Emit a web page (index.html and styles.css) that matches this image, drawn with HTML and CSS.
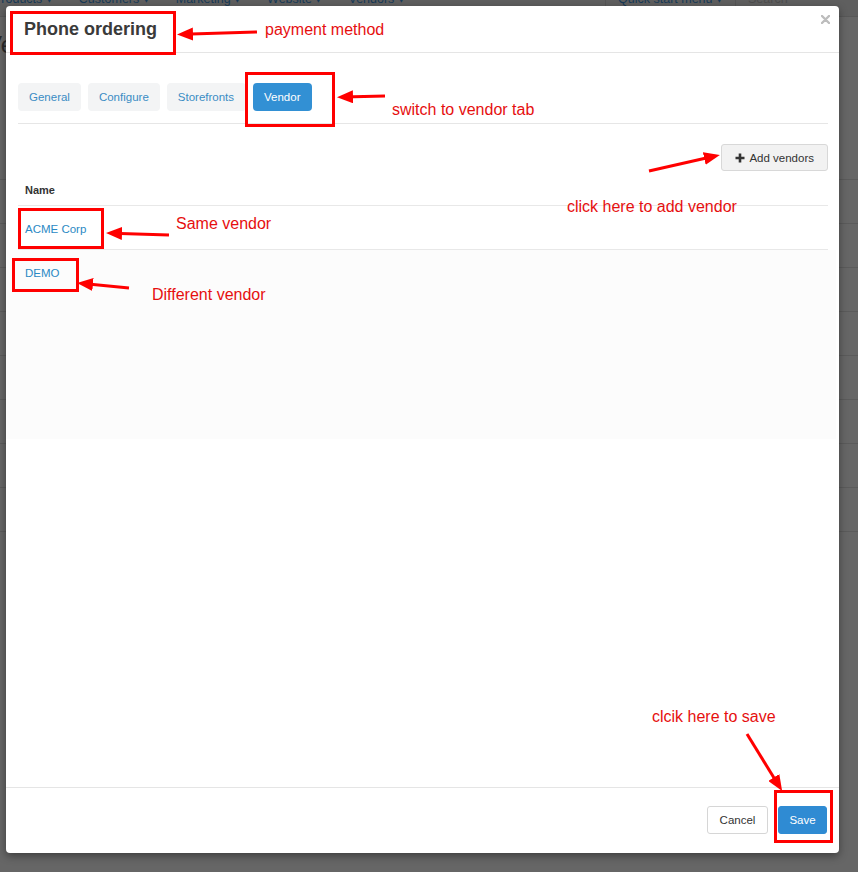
FILE: index.html
```html
<!DOCTYPE html>
<html lang="en">
<head>
  <meta charset="UTF-8" />
  <title>Phone ordering</title>
  <link rel="stylesheet" href="styles.css">
</head>
<body>

  <!-- page under the dialog, already dimmed -->
  <div class="page">
    <nav class="navbar">
      <a class="first">Products ▾</a>
      <a>Customers ▾</a>
      <a>Marketing ▾</a>
      <a>Website ▾</a>
      <a>Vendors ▾</a>
      <span class="nav-right">
        <a class="quick">Quick start menu ▾</a>
        <span class="search">Search</span>
      </span>
    </nav>
    <h1 class="page-title">Vendors</h1>
    <div class="page-rows">
      <div class="page-row"></div><div class="page-row"></div><div class="page-row"></div>
      <div class="page-row"></div><div class="page-row"></div><div class="page-row"></div>
      <div class="page-row"></div><div class="page-row"></div><div class="page-row"></div>
    </div>
  </div>

  <div class="modal">
    <div class="modal-header">
      <h3>Phone ordering</h3>
      <span class="close">
        <svg width="9" height="9" viewBox="0 0 9 9"><path d="M1 1L8 8M8 1L1 8" stroke="#bdbdbd" stroke-width="2.4" stroke-linecap="round"/></svg>
      </span>
    </div>

    <div class="modal-body">
      <div class="tabs">
        <a class="tab">General</a>
        <a class="tab">Configure</a>
        <a class="tab wide">Storefronts</a>
        <a class="tab active">Vendor</a>
      </div>

      <div class="toolbar">
        <button class="btn btn-add">
          <svg width="10" height="10" viewBox="0 0 10 10"><path d="M5 0.5V9.5M0.5 5H9.5" stroke="#333" stroke-width="2.6"/></svg>
          Add vendors
        </button>
      </div>

      <div class="vendor-table">
        <div class="vt-head">Name</div>
        <div class="vt-row"><a>ACME Corp</a></div>
        <div class="vt-band">
          <div class="vt-row last"><a>DEMO</a></div>
        </div>
      </div>
    </div>

    <div class="modal-footer">
      <button class="btn btn-cancel">Cancel</button>
      <button class="btn btn-save">Save</button>
    </div>
  </div>

  <svg class="notes" width="858" height="872" viewBox="0 0 858 872">
    <defs>
      <marker id="head" markerUnits="userSpaceOnUse" markerWidth="17" markerHeight="13" refX="10" refY="6.5" orient="auto">
        <path d="M0 0L16 6.5L0 13z" fill="#f00"/>
      </marker>
    </defs>
    <g fill="none" stroke="#f00" stroke-width="3">
      <rect x="11.5" y="12.5" width="163" height="41"/>
      <rect x="246.5" y="73.5" width="87" height="52"/>
      <rect x="19.5" y="209.5" width="83" height="38"/>
      <rect x="13.5" y="259.5" width="64" height="31"/>
      <rect x="775.5" y="791.5" width="56" height="50"/>
    </g>
    <g stroke="#f00" stroke-width="3" marker-end="url(#head)">
      <line x1="257" y1="32" x2="183" y2="34.3"/>
      <line x1="385" y1="96" x2="343" y2="97"/>
      <line x1="649" y1="171" x2="714" y2="156.3"/>
      <line x1="169" y1="235" x2="112" y2="233.2"/>
      <line x1="129" y1="288" x2="83" y2="283.6"/>
      <line x1="747" y1="734" x2="779" y2="786"/>
    </g>
    <g class="note-text">
      <text x="265" y="35">payment method</text>
      <text x="392" y="115">switch to vendor tab</text>
      <text x="567" y="212">click here to add vendor</text>
      <text x="176" y="229">Same vendor</text>
      <text x="152" y="300">Different vendor</text>
      <text x="652" y="722">clcik here to save</text>
    </g>
  </svg>

</body>
</html>
```

FILE: styles.css
```css
* {
  box-sizing: border-box;
}
body {
  margin: 0;
  font-family: 'Liberation Sans', Arial, sans-serif;
  background: #666;
  color: #333;
  overflow: hidden;
  height: 872px;
}

/* dimmed page behind the dialog */
.navbar {
  height: 17px;
  background: #5f5f5f;
  border-bottom: 1px solid #585858;
  display: flex;
  align-items: flex-end;
  font-size: 12.5px;
  line-height: 14px;
  padding-bottom: 10px;
  white-space: nowrap;
}
.navbar a {
  color: #173a58;
  margin-right: 26px;
}
.navbar a.first {
  margin-left: -7px;
}
.nav-right {
  margin-left: auto;
  display: flex;
}
.navbar .quick {
  border-left: 1px solid #555;
  padding-left: 12px;
  margin-right: 12px;
}
.search {
  border-left: 1px solid #555;
  padding-left: 12px;
  width: 123px;
  color: #4d4d4d;
}
.page-title {
  margin: 14px 0 0 -14px;
  font-size: 24px;
  font-weight: normal;
  color: #2a2a2a;
  height: 105px;
}
.page-row {
  height: 44px;
  border-bottom: 1px solid #5b5b5b;
}

/* dialog */
.modal {
  position: absolute;
  left: 6px;
  top: 6px;
  width: 833px;
  height: 847px;
  background: #fff;
  border-radius: 4px;
  box-shadow: 0 3px 9px rgba(0, 0, 0, 0.4);
  display: flex;
  flex-direction: column;
}
.modal-header {
  height: 47px;
  border-bottom: 1px solid #e5e5e5;
  padding: 12px 18px 0;
}
.modal-header h3 {
  margin: 0;
  font-size: 18px;
  line-height: 22px;
  font-weight: bold;
  color: #3a3a3a;
}
.close {
  position: absolute;
  top: 9px;
  right: 9px;
  line-height: 0;
}
.modal-body {
  flex: 1;
  padding: 30px 11px 0 12px;
}
.tabs {
  display: flex;
  gap: 7px;
  padding-bottom: 12px;
  border-bottom: 1px solid #e6e6e6;
}
.tab {
  height: 28px;
  line-height: 28px;
  padding: 0 11px;
  font-size: 11.5px;
  border-radius: 4px;
  background: #f3f4f5;
  color: #3a8cc4;
}
.tab.wide {
  padding: 0 12px 0 11px;
}
.tab.active {
  background: #3290d4;
  color: #fff;
}
.toolbar {
  display: flex;
  justify-content: flex-end;
  margin-top: 20px;
}
.btn {
  font-family: inherit;
  font-size: 11.5px;
  height: 28px;
  border-radius: 3px;
  cursor: pointer;
}
.btn-add {
  height: 27px;
  padding: 0 13px;
  background: #f2f2f2;
  border: 1px solid #d8d8d8;
  color: #333;
  display: flex;
  align-items: center;
  gap: 4px;
}
.vt-head {
  height: 35px;
  padding: 0 0 8px 7px;
  display: flex;
  align-items: flex-end;
  font-size: 11px;
  line-height: 13px;
  font-weight: bold;
  border-bottom: 1px solid #e8e8e8;
}
.vt-row {
  height: 44px;
  padding: 2px 0 0 7px;
  display: flex;
  align-items: center;
  font-size: 11.5px;
  border-bottom: 1px solid #e8e8e8;
}
.vt-row a {
  color: #2b89c4;
}
.vt-band {
  margin: 0 -8px 0 -12px;
  height: 189px;
  background: #fcfcfc;
}
.vt-row.last {
  height: 43px;
  padding-left: 19px;
  border-bottom: none;
}
.modal-footer {
  height: 66px;
  border-top: 1px solid #e5e5e5;
  padding: 18px 12px 0;
  display: flex;
  justify-content: flex-end;
  gap: 10px;
}
.btn-cancel {
  width: 61px;
  padding: 0;
  background: #fff;
  border: 1px solid #d6d6d6;
  color: #333;
}
.btn-save {
  width: 49px;
  padding: 0;
  background: #2f8bd3;
  border: 1px solid #2f8bd3;
  color: #fff;
}

/* red annotations */
.notes {
  position: absolute;
  left: 0;
  top: 0;
  pointer-events: none;
}
.note-text text {
  font-family: 'Liberation Sans', Arial, sans-serif;
  font-size: 16px;
  fill: #e60f0f;
}
```
